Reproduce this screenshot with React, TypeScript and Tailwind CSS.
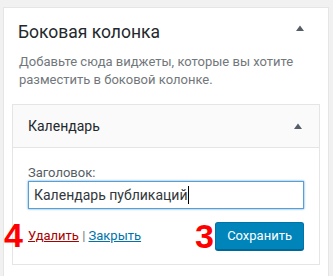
import React from 'react';

const Caret = ({ className }: { className: string }) => (
  <svg className={className} width="8" height="6" viewBox="0 0 8 6">
    <polygon points="0,6 4,0.5 8,6" fill="#555d66" />
  </svg>
);

const App: React.FC = () => {
  return (
    <div className="w-[333px] h-[276px] overflow-hidden bg-[#f1f1f1] pl-[3px] pt-[7px] font-['Roboto','Noto_Sans',sans-serif]">
      <div className="relative w-[326px] h-[300px] border border-[#e5e5e5] bg-white">
        {/* Sidebar heading */}
        <div className="flex justify-between pl-[14px] pr-[24px] pt-[13px]">
          <h2 className="text-[17.5px] leading-[22px] text-[#23282d]">Боковая колонка</h2>
          <Caret className="mt-[4px]" />
        </div>
        <p className="mt-[10px] pl-[15px] pr-[20px] text-[13px] leading-[18px] text-[#72777c]">
          Добавьте сюда виджеты, которые вы хотите разместить в боковой колонке.
        </p>

        {/* Widget */}
        <div className="mx-[8px] mt-[15px] border border-[#e5e5e5]">
          <div className="flex h-[43px] items-center justify-between border-b border-[#e5e5e5] bg-[#fafafa] pl-[15px] pr-[17px]">
            <h3 className="text-[14px] text-[#23282d]">Календарь</h3>
            <Caret className="" />
          </div>
          <div className="px-[15px] pt-[17px] pb-[14px]">
            <label className="block text-[13px] leading-[16px] text-[#555d66]">Заголовок:</label>
            <div className="flex h-[28px] items-center border border-[#5b9dd9] pl-[5px] text-[14px] text-[#32373c] shadow-[0_0_2px_rgba(30,140,190,0.8)]">
              <span>Календарь публикаций</span>
              <span className="ml-[1px] h-[18px] w-px bg-[#000]" />
            </div>
            <div className="mt-[13px] flex items-center justify-between">
              <div className="text-[13px] leading-[18px]">
                <a href="#" className="text-[#a00] underline">Удалить</a>
                <span className="text-[#72777c]"> | </span>
                <a href="#" className="text-[#0073aa] underline">Закрыть</a>
              </div>
              <button className="h-[28px] rounded-[3px] border border-[#0073aa] border-b-[#006799] bg-[#0085ba] px-[11px] text-[13px] text-white shadow-[0_1px_0_#006799]">
                Сохранить
              </button>
            </div>
          </div>
        </div>

        {/* Annotations */}
        <span className="absolute left-[0px] top-[210px] font-['Liberation_Sans',Arial,sans-serif] text-[34px] leading-none font-bold text-[#ff0000]">4</span>
        <span className="absolute left-[191px] top-[211px] font-['Liberation_Sans',Arial,sans-serif] text-[34px] leading-none font-bold text-[#ff0000]">3</span>
      </div>
    </div>
  );
};

export default App;
